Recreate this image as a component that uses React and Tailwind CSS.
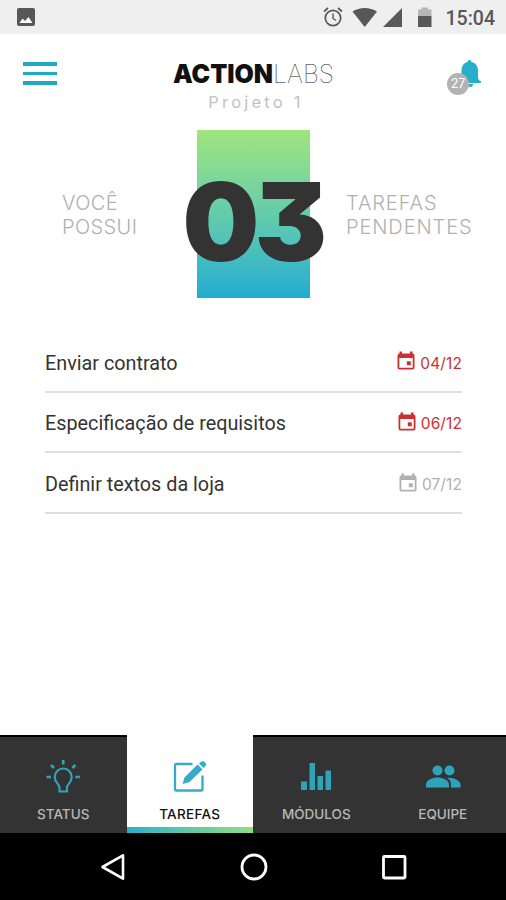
const tasks = [
  { title: "Enviar contrato", date: "04/12", late: true },
  { title: "Especificação de requisitos", date: "06/12", late: true },
  { title: "Definir textos da loja", date: "07/12", late: false },
];

const StatusBar = () => {
  return (
    <div className="flex h-[34px] w-full items-center bg-[#efefef] pl-[17px] pr-[11px] text-[#585858]">
      <svg width="18" height="18" viewBox="0 0 18 18">
        <rect width="18" height="18" rx="2" fill="#585858" />
        <path d="M2.500 15 L5.500 10.500 L8 13 L11.500 9 L15.500 15 Z" fill="#fff" />
      </svg>
      <svg width="110" height="22" viewBox="0 0 110 22" className="ml-auto">
        <g fill="none" stroke="#585858" strokeWidth="1.700">
          <circle cx="10" cy="12" r="7.700" />
          <path d="M10 7.500 V12.500 L13 14.500" strokeWidth="1.400" />
          <path d="M1 5.500 L5 2 M19 5.500 L15 2" />
        </g>
        <path d="M29.500 5.500 C36.500 0.700 47 0.700 54 5.500 L41.700 21 Z" fill="#585858" />
        <path d="M60 21 L79 2 V21 Z" fill="#585858" />
        <path d="M98.500 1.500 h6.500 v2 h3.500 v6.500 h-13.500 v-6.500 h3.500 Z" fill="#b5b5b5" />
        <path d="M95 10 h13.500 v11 h-13.500 Z" fill="#585858" />
      </svg>
      <span className="ml-[13px] mt-[3px] font-['Roboto',sans-serif] text-[19.500px] font-medium leading-none">
        15:04
      </span>
    </div>
  );
};

const Header = () => {
  return (
    <header className="flex h-[86px] items-start justify-between pl-[23px] pr-[25px]">
      <div className="mt-[28px] flex w-[34px] flex-col gap-[6px]">
        <span className="h-[3.500px] bg-[#1fa9c2]" />
        <span className="h-[3.500px] bg-[#1fa9c2]" />
        <span className="h-[3.500px] bg-[#1fa9c2]" />
      </div>
      <div className="ml-[4px] mt-[22px] flex w-[164px] flex-col items-center">
        <svg width="164" height="36" viewBox="0 0 164 36" className="overflow-visible font-['Inter',sans-serif]">
          <text x="1" y="27" fontSize="26" fontWeight="900" fill="#111" textLength="100" lengthAdjust="spacingAndGlyphs">
            ACTION
          </text>
          <text x="101" y="27" fontSize="26" fontWeight="100" fill="#222" textLength="61" lengthAdjust="spacingAndGlyphs">
            LABS
          </text>
        </svg>
        <span className="ml-[4px] whitespace-nowrap font-['Inter',sans-serif] text-[16.500px] leading-[20px] tracking-[3.200px] text-[#c2c2c2]">
          Projeto 1
        </span>
      </div>
      <div className="relative mt-[25px] h-[36px] w-[34px]">
        <svg width="22" height="28" viewBox="0 0 22 28" className="absolute right-0 top-0" fill="#26aeca">
          <path d="M10.500 1 a2 2 0 0 1 2 2 C17.500 4 19 8 19 12 V18 C19 20.500 20 21.500 22 22.500 V24 H0 V22.500 C1.500 21.500 2.500 20.500 2.500 18 V12 C2.500 8 4 4 8.500 3 a2 2 0 0 1 2 -2 Z" />
          <path d="M8 25 h6 a3 3 0 0 1 -6 0 Z" />
        </svg>
        <span className="absolute left-0 top-[14px] flex h-[22px] w-[22px] items-center justify-center rounded-full bg-[#b3b3b3] font-['Inter',sans-serif] text-[12.500px] leading-none text-white">
          27
        </span>
      </div>
    </header>
  );
};

const Summary = () => {
  return (
    <section className="mt-[10px] flex h-[168px] font-['Inter',sans-serif] text-[20px] font-light leading-[24px] text-[#b0b0b0]">
      <p className="w-[197px] shrink-0 pl-[62px] pt-[61px] tracking-[0.400px]">
        VOCÊ
        <br />
        POSSUI
      </p>
      <div className="flex w-[113px] shrink-0 items-center justify-center bg-linear-to-b from-[#a0e57c] via-[#63ccab] to-[#20add0]">
        <span className="mr-[2px] mt-[16px] text-[108px] font-black leading-none tracking-[-4.500px] text-[#333] [font-feature-settings:'cv09']">
          03
        </span>
      </div>
      <p className="pl-[36px] pt-[61px] tracking-[0.900px]">
        TAREFAS
        <br />
        PENDENTES
      </p>
    </section>
  );
};

const CalendarIcon = () => {
  return (
    <svg width="18" height="20" viewBox="0 0 18 20" fill="currentColor">
      <path d="M2.500 0.500 h2.500 v2 h8 v-2 h2.500 v2 Q17.500 2.500 17.500 4.500 V16.500 Q17.500 18.500 15.500 18.500 H2.500 Q0.500 18.500 0.500 16.500 V4.500 Q0.500 2.500 2.500 2.500 Z M2.300 7 V16.700 H15.700 V7 Z" fillRule="evenodd" />
      <rect x="9.800" y="10.200" width="4" height="4" rx="0.500" />
    </svg>
  );
};

const TaskList = () => {
  return (
    <ul className="ml-[45px] mt-[34px] w-[417px]">
      {tasks.map((task) => (
        <li
          key={task.date}
          className="flex h-[60.700px] items-center justify-between border-b-2 border-[#dfdfdf] pt-[4px]"
        >
          <span className="font-['Roboto',sans-serif] text-[19.800px] text-[#333]">{task.title}</span>
          <span
            className={`flex items-center gap-[5px] font-['Inter',sans-serif] text-[15.500px] tracking-[0.100px] ${
              task.late ? "text-[#cf2f30]" : "text-[#b0b0b0]"
            }`}
          >
            <span className="-mt-[4px]">
              <CalendarIcon />
            </span>
            {task.date}
          </span>
        </li>
      ))}
    </ul>
  );
};

const BulbIcon = () => {
  return (
    <svg width="36" height="36" viewBox="0 0 36 36" fill="none" stroke="#2fa3ba" strokeWidth="2.200">
      <path d="M14.500 32.500 V28.500 C14.500 25.500 9.700 23.500 9.700 18 a8.500 8.500 0 0 1 17 0 C26.700 23.500 21.900 25.500 21.900 28.500 V32.500 Z" />
      <path d="M18.200 1 V5.500 M1.500 18 H6 M30.400 18 H34.900 M6 6 L9 9 M30.400 6 L27.400 9" strokeWidth="2.700" />
    </svg>
  );
};

const EditIcon = () => {
  return (
    <svg width="36" height="36" viewBox="0 0 36 36">
      <path d="M20.500 5 H4.500 Q3 5 3 6.500 V30 Q3 31.500 4.500 31.500 H29 Q30.500 31.500 30.500 30 V16.500" fill="none" stroke="#35abc5" strokeWidth="2.300" />
      <path d="M10.500 25 L12.500 18.500 L25.500 5.500 L30.500 10.500 L17.500 23 Z" fill="#35abc5" />
      <path d="M27 4.500 L29 2.700 Q31 1.500 32.700 3 Q34.800 5 33.500 7 L31.500 9 Z" fill="#35abc5" />
    </svg>
  );
};

const BarsIcon = () => {
  return (
    <svg width="36" height="36" viewBox="0 0 36 36" fill="#2fa3ba">
      <rect x="3" y="22.500" width="6" height="8.500" />
      <rect x="11.500" y="4" width="5.500" height="27" />
      <rect x="19.500" y="17" width="5.500" height="14" />
      <rect x="27.500" y="11.500" width="5.500" height="19.500" />
    </svg>
  );
};

const TeamIcon = () => {
  return (
    <svg width="36" height="36" viewBox="0 0 36 36" fill="#2fa3ba">
      <circle cx="12.500" cy="11.500" r="5" />
      <circle cx="24.500" cy="11.500" r="5" />
      <path d="M1 28.500 V25.500 C1 21 8 18.500 12.500 18.500 C17 18.500 24 21 24 25.500 V28.500 Z" />
      <path d="M22 18.800 C27 18 35.500 21 35.500 25.500 V28.500 H26 V25.500 C26 22.500 24.500 20.300 22 18.800 Z" />
    </svg>
  );
};

const Tab = ({ icon, label, active }) => {
  return (
    <div
      className={`flex w-1/4 flex-col items-center font-['Inter',sans-serif] text-[13.500px] font-medium leading-[16px] ${
        active
          ? "bg-white pt-[24px] tracking-[0.300px] text-[#111]"
          : "border-t-2 border-black bg-[#333] pt-[22px] text-[#b8b8b8]"
      }`}
    >
      <div className="flex h-[36px] items-center">{icon}</div>
      <span className="mt-[11px]">{label}</span>
      {active && <div className="mt-auto h-[6px] w-full bg-linear-to-r from-[#25b0c8] to-[#90dd80]" />}
    </div>
  );
};

const TabBar = () => {
  return (
    <nav className="mt-auto flex h-[98px] w-full">
      <Tab icon={<BulbIcon />} label="STATUS" />
      <Tab icon={<EditIcon />} label="TAREFAS" active />
      <Tab icon={<BarsIcon />} label="MÓDULOS" />
      <Tab icon={<TeamIcon />} label="EQUIPE" />
    </nav>
  );
};

const SystemNav = () => {
  return (
    <div className="flex h-[67px] w-full items-center justify-between bg-black pl-[99px] pr-[98px]">
      <svg width="28" height="28" viewBox="0 0 28 28" fill="none" stroke="#fff" strokeWidth="2.600" strokeLinejoin="round">
        <path d="M3.500 14 L24 2.300 V25.700 Z" />
      </svg>
      <svg width="28" height="28" viewBox="0 0 28 28" fill="none" stroke="#fff" strokeWidth="2.800">
        <circle cx="14" cy="14" r="12" />
      </svg>
      <svg width="28" height="28" viewBox="0 0 28 28" fill="none" stroke="#fff" strokeWidth="2.800">
        <rect x="3.500" y="3.500" width="21.500" height="21.500" rx="1" />
      </svg>
    </div>
  );
};

export default function App() {
  return (
    <div className="flex h-[900px] w-[506px] flex-col overflow-hidden bg-white">
      <StatusBar />
      <Header />
      <Summary />
      <TaskList />
      <TabBar />
      <SystemNav />
    </div>
  );
}
